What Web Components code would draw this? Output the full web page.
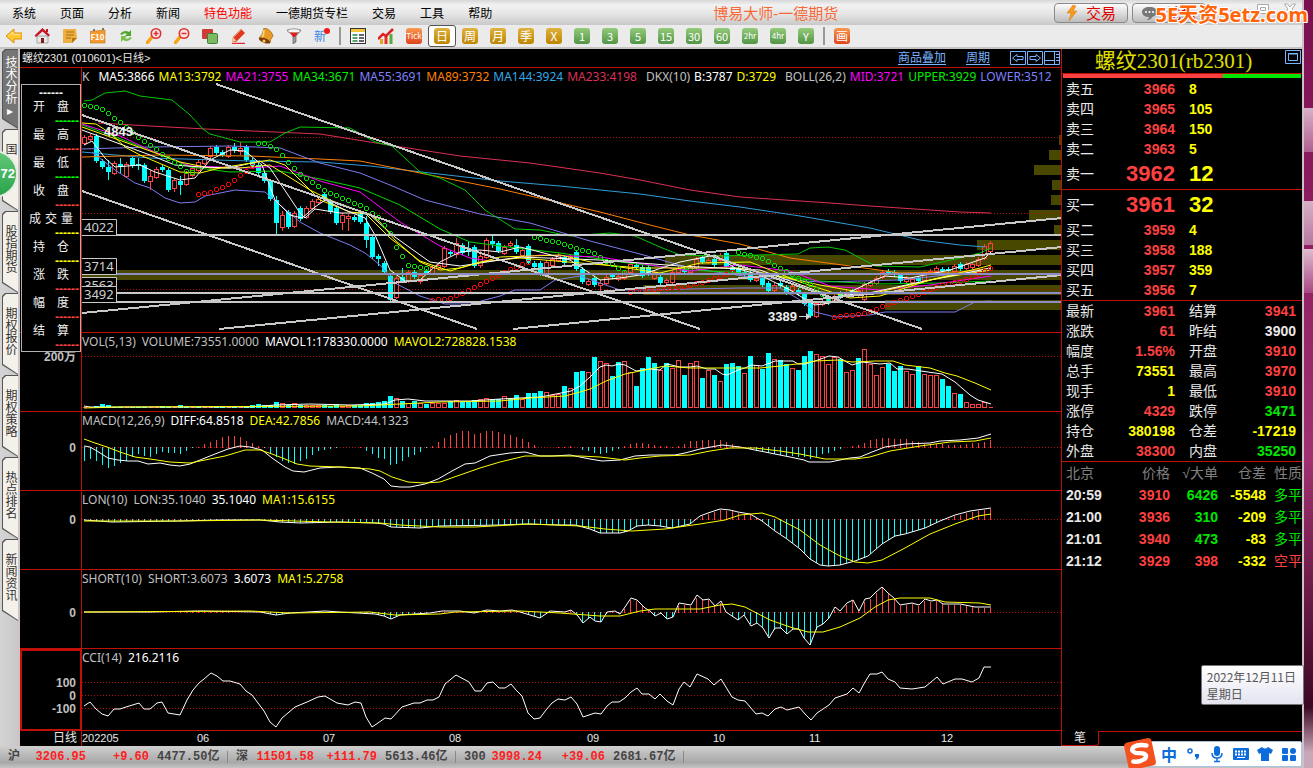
<!DOCTYPE html>
<html lang="zh-CN">
<head>
<meta charset="utf-8">
<title>博易大师-一德期货</title>
<style>
    html, body { margin: 0; height: 100%; }
    body {
        --line: #c01008;
        --up: #ff4040;
        --down: #00e600;
        --mark: #ffff00;
        --ui: "Liberation Sans", "Noto Sans CJK SC", sans-serif;
        --plot: "Noto Sans", "Noto Sans CJK SC", sans-serif;
        font-family: var(--ui);
        font-size: 12px;
        background: #000;
        overflow: hidden;
    }
</style>
</head>
<body>
<trade-app></trade-app>

<script>
const RESET = `
    * { box-sizing: border-box; }
    button { font: inherit; color: inherit; background: none; border: 0; padding: 0; margin: 0; cursor: pointer; }
    svg { display: block; }
`;

/* ---------- menu bar ---------- */
class MenuBar extends HTMLElement {
    constructor() {
        super();
        this.attachShadow({ mode: 'open' });
    }

    connectedCallback() {
        const items = ['系统', '页面', '分析', '新闻', '特色功能', '一德期货专栏', '交易', '工具', '帮助'];
        this.shadowRoot.innerHTML = `
            <style>
                ${RESET}
                :host {
                    display: grid;
                    grid-template-columns: 1fr auto 1fr;
                    align-items: center;
                    height: 25px;
                    position: relative;
                    background: linear-gradient(#d8d8d8, #f2f2f2 20%, #e6e6e6 55%, #c9c9c9);
                    color: #000;
                }
                nav { display: flex; gap: 24px; padding-left: 12px; white-space: nowrap; }
                .hot { color: #f00; }
                h1 { margin: 0; padding-left: 221px; font-size: 15px; font-weight: 400; color: #f76a38; white-space: nowrap; }
                .right { display: flex; justify-content: flex-end; gap: 4px; height: 20px; }
                .deal {
                    width: 74px;
                    border: 1px solid #8a8a8a;
                    border-radius: 4px;
                    background: linear-gradient(#fdfdfd, #d6d6d6 60%, #bcbcbc);
                    color: #e00000;
                    font-size: 15px;
                    display: flex;
                    align-items: center;
                    justify-content: center;
                    gap: 8px;
                }
                .win { display: flex; gap: 2px; width: 92px; justify-content: space-around; align-items: flex-start; padding-left: 14px; }
                .mark {
                    position: absolute;
                    right: 0;
                    top: 2px;
                    margin-right: -6px;
                    z-index: 3;
                    font: bold 20px/25px "Noto Sans", "Noto Sans CJK SC", sans-serif;
                    color: #ff6408;
                    text-shadow: 1px 1px #fff, -1px -1px #fff, 1px -1px #fff, -1px 1px #fff;
                    white-space: nowrap;
                }
            </style>
            <nav>${items.map(t => `<button${t === '特色功能' ? ' class="hot"' : ''}>${t}</button>`).join('')}</nav>
            <h1>博易大师-一德期货</h1>
            <div class="right">
                <button class="deal">
                    <svg width="12" height="16" viewBox="0 0 12 16"><path d="M7 0 1 8h4L3 16l8-10H7l3-5z" fill="#f79a1c" stroke="#d87a10" stroke-width=".5"/></svg>交易
                </button>
                <button class="deal">
                    <svg width="17" height="14" viewBox="0 0 17 14"><path d="M8.500 1C4 1 1 3 1 6s3 5 7 5c0 1-1 2-2 3 3 0 5-2 5-3 3-1 5-2 5-5s-3-5-7.500-5z" fill="#777"/><circle cx="5" cy="6" r="1" fill="#fff"/><circle cx="8.500" cy="6" r="1" fill="#fff"/><circle cx="12" cy="6" r="1" fill="#fff"/></svg>论坛
                </button>
                <div class="win">
                    <button aria-label="最小化"><svg width="14" height="12"><rect x="1.500" y="7.500" width="10" height="3" fill="#fff" stroke="#aaa"/></svg></button>
                    <button aria-label="最大化"><svg width="14" height="12"><path d="M1.500 1.500h11v9h-11zM4.500 4.500h5v3h-5z" fill="#fff" stroke="#aaa"/></svg></button>
                    <button aria-label="关闭"><svg width="14" height="12"><path d="M1.500 1h3L7 4l2.500-3h3L9 6l3.500 5h-3L7 8l-2.500 3h-3L5 6z" fill="#fff" stroke="#aaa"/></svg></button>
                </div>
            </div>
            <span class="mark">5E天资5etz.com</span>
        `;
    }
}

/* ---------- tool bar ---------- */
const ICONS = {
    '后退': '<path d="M0 8 8 1v4h8v6H8v4z" fill="#ffc62e" stroke="#d8920c"/><path d="M2.500 8l4.500-4v2.500h7" fill="none" stroke="#ffe89a"/>',
    '首页': '<path d="M3 8h11v7H3z" fill="#e8e8e8" stroke="#777" stroke-width=".6"/><path d="M8.500 0 16 7l-1.500 1.500L8.500 3.500 2 9 .5 7.500z" fill="#c41826"/><path d="M12 1h2v3h-2z" fill="#c41826"/><path d="M7 10h3v5H7z" fill="#7a2020"/>',
    '便笺': '<path d="M1 1.500Q1 1 2 1h12l1 9-5 5H1z" fill="#eeb040"/><path d="M4 4h8M4 7h8M4 10h5" stroke="#a86c10"/><path d="M15 10l-5 5v-5z" fill="#b87812"/>',
    'F10': '<path d="M0 3.500 15 2v13H0z" fill="#f39a30" stroke="#c07010" stroke-width=".6"/><path d="M3 1h2v2H3zM12 0h2v2h-2z" fill="#777"/><text x="7.500" y="12" font-size="8" font-weight="bold" text-anchor="middle" fill="#fff">F10</text>',
    '刷新': '<path d="M2 6q4-5 9-2l2-2v6H7l2-2Q6 4 4 7z" fill="#4fa62c"/><path d="M14 10q-4 5-9 2l-2 2V8h6l-2 2q3 2 5-1z" fill="#78c24c"/>',
    '放大': '<path d="M6 9 1 15" stroke="#f6a614" stroke-width="3.500" stroke-linecap="round"/><circle cx="10" cy="5.500" r="4.700" fill="#ffe4e4" stroke="#e03030" stroke-width="1.600"/><path d="M7.500 5.500h5M10 3v5" stroke="#e03030" stroke-width="1.500"/>',
    '缩小': '<path d="M6 9 1 15" stroke="#f6a614" stroke-width="3.500" stroke-linecap="round"/><circle cx="10" cy="5.500" r="4.700" fill="#ffe4e4" stroke="#e03030" stroke-width="1.600"/><path d="M7.500 5.500h5" stroke="#e03030" stroke-width="1.500"/>',
    '叠加': '<rect x="0" y="1" width="11" height="10" rx="1" fill="#d23a34"/><rect x="5.500" y="5.500" width="10" height="10" rx="1" fill="#7cba62" stroke="#3c8038"/>',
    '画线': '<path d="M2 14l1-5 8-8 4 4-9 9z" fill="#e0381c"/><path d="M4 9l8-8" stroke="#f48a6c"/><path d="M2 14l1-5 3.500 4z" fill="#f3d19a"/><path d="M2 15.500h13" stroke="#e03030" stroke-width="1.500"/>',
    '预警': '<path d="M6 0q-1 7-5 10l11 5q0-4 3-7Q13 1 6 0z" fill="#e89a24" stroke="#a05c10" stroke-width=".7"/><path d="M6 2q0 5-2 8" stroke="#ffd878" stroke-width="1.500" fill="none"/><ellipse cx="6.500" cy="12.500" rx="6" ry="2.300" transform="rotate(22 6.500 12.500)" fill="#7b3d0d"/><circle cx="6" cy="13" r="1.500" fill="#ffcf4d"/>',
    '筛选': '<path d="M1 2h14l-5 6v6l-3 2V8z" fill="#999" stroke="#666" stroke-width=".7"/><ellipse cx="8" cy="3" rx="6.500" ry="2.200" fill="#f4f4f4" stroke="#777" stroke-width=".7"/><path d="M4 4.500h8L9 9H7z" fill="#e02020"/>',
    '新': '<text x="6" y="13" font-size="12" text-anchor="middle" fill="#3c86e0">新</text><circle cx="13" cy="3" r="3" fill="#f01818"/>',
    '报价': '<rect x=".5" y=".5" width="15" height="15" fill="#fff" stroke="#333"/><path d="M1 2.500h14" stroke="#f2c53c" stroke-width="3"/><path d="M2.500 7h5M2.500 10h5M2.500 13h5" stroke="#1c8a3c" stroke-width="1.500"/><path d="M9 7h5M9 10h5M9 13h5" stroke="#334" stroke-width="1.500"/>',
    '走势': '<path d="M2 11h3v5H2z" fill="#f0a020"/><path d="M6.500 8h3v8h-3z" fill="#e03020"/><path d="M11.500 6h3v10h-3z" fill="#5aa83c"/><path d="M0 11l5-5 3 2 7-7" fill="none" stroke="#e02020" stroke-width="2.500"/>'
};

class ToolBar extends HTMLElement {
    constructor() {
        super();
        this.attachShadow({ mode: 'open' });
    }

    connectedCallback() {
        const icon = name => `<button class="tool" aria-label="${name}"><svg width="16" height="16" viewBox="0 0 16 16">${ICONS[name]}</svg></button>`;
        const key = (t, kind) => `<button class="tool${t === '日' ? ' on' : ''}"><span class="${kind}${t.length > 2 ? ' tight' : ''}">${t}</span></button>`;
        const names = Object.keys(ICONS);
        this.shadowRoot.innerHTML = `
            <style>
                ${RESET}
                :host {
                    display: flex;
                    align-items: center;
                    height: 24px;
                    background: #ebebeb;
                    border-bottom: 2px solid #c8c4c4;
                    font-family: "Noto Sans CJK SC", sans-serif;
                }
                .tool { width: 28px; height: 22px; flex: none; display: flex; align-items: center; justify-content: center; }
                .on { background: #fff; border: 1px solid #555; border-radius: 3px; }
                i { width: 2px; height: 18px; margin: 0 3px; background: #999; }
                span {
                    width: 16px;
                    height: 16px;
                    border-radius: 3px;
                    color: #fff;
                    font-size: 12px;
                    line-height: 16px;
                    text-align: center;
                    overflow: hidden;
                    white-space: nowrap;
                }
                .gold { background: linear-gradient(#dfb340, #bd8500); }
                .leaf { background: linear-gradient(#95cb7a, #529545); font-size: 11px; }
                .fire { background: linear-gradient(#f79a50, #e0441c); }
                .tight { font-size: 8px; }
            </style>
            ${names.slice(0, 12).map(icon).join('')}<i></i>
            ${names.slice(12).map(icon).join('')}${key('Tick', 'fire')}
            ${['日', '周', '月', '季', 'X'].map(t => key(t, 'gold')).join('')}
            ${['1', '3', '5', '15', '30', '60', '2hr', '4hr', 'Y'].map(t => key(t, 'leaf')).join('')}
            <i></i>${key('画', 'fire')}
        `;
    }
}

/* ---------- vertical page tabs ---------- */
class SideTabs extends HTMLElement {
    constructor() {
        super();
        this.attachShadow({ mode: 'open' });
    }

    connectedCallback() {
        const tabs = ['国', '股指期货', '期权报价', '期权策略', '热点排名', '新闻资讯'];
        this.shadowRoot.innerHTML = `
            <style>
                ${RESET}
                :host {
                    display: flex;
                    flex-direction: column;
                    position: relative;
                    width: 20px;
                    padding-left: 2px;
                    background: linear-gradient(90deg, #d4d4d4, #cacaca 16px, #cdc4c6 18px);
                }
                button {
                    width: 16px;
                    height: 82px;
                    padding-top: 14px;
                    display: flex;
                    position: relative;
                    isolation: isolate;
                    color: #333;
                    background: #555;
                    writing-mode: vertical-rl;
                    align-items: center;
                    line-height: 16px;
                    clip-path: polygon(0 3px, 3px 0, 100% 0, 100% 100%, 0 calc(100% - 10px));
                }
                button::before {
                    content: "";
                    position: absolute;
                    z-index: -1;
                    inset: 1px 0 1px 1px;
                    background: #f3f1ea;
                    clip-path: polygon(0 3px, 3px 0, 100% 0, 100% 100%, 0 calc(100% - 10px));
                }
                .on { height: 80px; padding-top: 7px; color: #fff; }
                .on::before { background: #757575; }
                .badge {
                    position: absolute;
                    left: -30px;
                    top: 101px;
                    width: 48px;
                    height: 48px;
                    border: 2px solid #e4ece4;
                    border-radius: 50%;
                    background: linear-gradient(#62c878, #28a24a);
                    color: #fff;
                    font: bold 13px/44px var(--ui);
                    text-align: right;
                    padding-right: 1px;
                }
            </style>
            <button class="on">技术分析▸</button>
            ${tabs.map(t => `<button>${t}</button>`).join('')}
            <div class="badge">72</div>
        `;
    }
}

/* ---------- chart data, page pixels ---------- */
const STEP = 6;
const FIRST_X = 84;
const COUNT = 152;

const CANDLES = `r137/143 r136/139 c136/161 c161/167 c167/172/160/180 r163/173 c164/167/158/173 r164/176 c158/166 c164/166/158/170
c165/181 r176/181/170/190 r169/177 c167/170 c170/190 r180/188/178/192 c181/185/176/195 r173/184 r168/175 r162/170
r159/163 r148/156 c147/153 c152/155 r147/156 c147/150/143/153 r148/151/142/155 c147/160 c160/166 c165/173
c173/181 c181/199 c200/223/196/234 r215/227/211/231 c212/227 r213/226 c208/219 r208/217 r201/208 r199/202
c194/199 c201/212 c208/223 r215/222/213/230 r216/218/214/231 c217/220 c214/222 c223/240/216/248 c237/257 c256/259/254/266
c263/272 c276/300 r278/297 c277/281/268/283 r272/281 c272/277 r275/281/273/284 c271/273 r267/273 r265/268
r248/266 c252/254 r243/254/238/258 c245/253 c250/252/242/256 c247/266 r256/265/251/268 r240/257 c241/244/236/248 c243/251
r247/253 r243/245 c245/252/239/254 r250/255 c246/263 c263/267 c263/274 r262/273 r259/265 r255/260
c257/263 r256/258 c252/269 c269/282 r281/284 c278/285 r283/285/280/292 r277/283 c275/277 r276/279
r273/278 r264/272 c265/267 c267/276 c267/274 r272/278 c277/283 r280/282 r272/282 r268/272
c269/272 r267/272 r259/267 c257/262 r260/262 c259/265 r255/260 c253/267 c267/270 c268/273
c272/275 c273/280 r278/280 c278/285 c283/291 r285/290 c283/286 c287/293 r286/290 c290/294
c294/304 c302/316 r303/316 r301/304 c298/303 r296/301 c293/297 r292/296 c291/295 r290/295
r284/299 r282/285 r278/283 r272/277 c271/273 c272/275 c275/281 r278/281 r279/282 c278/281
r273/280 r271/273 r268/271 c269/271 c269/271 r266/271 c264/269 r264/268 r264/267 r259/265
r246/258 r243/251`.split(/\s+/);

const VOLUME = `r1 r1 c2 c4 c3 c1 c1 r1 c1 c1 c1 r1 r1 c2 c1 r1 c3 c1 r1 c1 r1 r1 c1 c1 r1 c1 r1 c2 c3 c4 c3 c3 c6 r5 c3 r5 c3 r3 r3 r3 c3 c2 c4 r2 r3 c3 c3 c5 c5 c6
c7 c12 r10 c7 r5 c7 r5 c4 r5 r5 r5 c7 r8 c6 c7 c8 r9 r10 c9 c9 r12 c9 c13 r9 c15 c15 c17 r16 r13 r14 c22 r20 c36 c37 r36 c51 r47 r45 c32 c46
r47 r36 c22 c40 c51 c45 r38 c45 r40 r48 c33 r45 r47 c30 r38 c33 r27 c44 c45 c42 r35 c52 r43 c39 c55 r49 c48 c44 r40 c38 c52 c57 r54 r52 r44 r51 c49 r36 r38 c50
r59 r44 r33 r41 c44 c37 c42 r37 r34 c42 r34 r33 r33 c29 c22 r15 c14 r6 r4 r4 r6 r1`.split(/\s+/);

const LINES = {
    ma233: '98,123 150,126 206,129 320,134 395,146 460,156 530,163 600,173 640,180 690,190 740,197 830,203 870,206 960,212 991,213',
    ma144: '82,152 150,158 250,161 320,162 370,166 430,173 500,181 560,186 640,194 690,201 740,207 800,216 870,228 920,240 960,245 985,247',
    ma89: '82,157 160,155 250,156 320,159 360,161 430,175 500,189 600,212 650,225 690,235 740,244 790,258 850,266 900,273 960,272 991,268',
    ma55: '82,149 150,147 230,146 280,148 320,163 360,173 390,185 425,200 480,214 530,223 590,241 640,254 690,268 750,277 820,282 900,280 991,270',
    ma34: '82,125 110,135 150,150 190,167 230,172 280,171 320,179 360,188 400,205 440,229 470,242 500,246 560,253 620,262 690,270 760,274 820,281 880,284 940,283 991,281',
    ma21: '82,124 120,136 150,150 190,166 250,168 280,166 320,181 360,192 400,222 440,246 470,258 490,261 540,255 600,257 650,265 690,271 740,265 790,271 830,286 880,290 930,285 991,276',
    ma13: '82,123 96,124 110,133 125,147 140,155 180,172 200,173 220,168 270,160 285,165 300,180 320,200 350,212 370,214 380,222 395,240 420,262 440,270 460,268 500,257 560,255 600,264 660,273 700,263 750,262 800,282 850,298 880,296 930,280 980,268 991,265',
    ma5: '84,145 92,141 105,158 115,167 140,165 155,172 180,180 195,178 210,160 230,150 245,151 262,165 275,200 290,215 302,218 315,207 325,200 345,210 365,218 375,235 390,270 405,281 420,280 440,262 460,252 480,250 500,252 520,247 540,252 570,260 588,272 600,280 620,278 640,275 680,262 715,255 735,268 760,275 790,290 815,305 830,303 850,292 875,280 885,276 910,278 950,270 985,258 991,252',
    dkxB: '82,130 150,155 175,165 200,167 230,168 260,161 270,168 300,213 305,218 315,209 340,213 360,213 370,215 395,237 430,262 460,266 520,257 600,260 680,266 760,270 820,292 860,295 920,282 991,268',
    dkxD: '82,127 150,151 180,162 210,168 240,168 270,165 310,190 330,200 365,213 390,238 420,261 450,271 480,262 520,258 640,268 740,268 820,285 870,294 940,278 991,270',
    upper: '84,101 92,100 105,93 125,91 140,96 172,100 190,115 203,129 210,134 240,142 270,142 285,133 300,127 350,128 375,142 392,146 420,172 440,178 465,190 485,210 515,229 540,230 570,236 610,233 635,236 660,247 680,255 720,256 798,254 810,248 828,247 845,250 875,266 920,267 960,258 980,253 991,248',
    lower: '92,152 115,170 135,183 150,188 165,198 180,203 195,202 205,196 235,190 265,192 280,205 300,222 320,233 350,245 365,253 380,265 395,283 420,296 445,304 470,304 500,296 515,290 540,290 555,280 580,276 620,290 650,290 690,289 740,288 780,288 800,300 815,312 835,317 870,315 885,312 955,312 975,302 991,301',
    vol1: '84,406 90,407 250,407 275,405 310,404 350,405 385,404 395,400 408,399 425,401 470,401 500,399 520,398 540,397 556,394 571,391 580,386 590,377 600,367 606,365 612,366 619,364 625,365 636,371 650,369 660,370 667,364 680,367 690,367 697,366 707,369 715,369 722,374 727,375 738,370 745,368 751,365 762,366 775,361 793,361 798,364 805,364 815,361 829,356 838,357 852,365 862,362 880,364 890,363 897,369 908,369 921,371 942,374 955,382 970,395 978,400 991,404',
    vol2: '84,408 120,407 360,406 400,404 440,402 500,401 530,398 565,396 580,392 590,389 606,381 625,374 645,370 665,366 690,368 722,368 760,368 780,366 805,363 815,361 838,360 852,362 875,361 893,361 905,365 930,368 945,373 957,376 975,383 991,390',
    diff: '84,446 90,447 97,451 108,458 118,460 128,461 138,461 148,464 160,463 170,465 180,466 190,464 200,460 215,454 228,449 240,446 250,447 262,450 272,458 285,467 293,471 304,472 312,470 320,468 340,467 360,468 372,473 384,479 391,486 400,487 410,487 425,484 438,479 452,471 465,464 475,463 490,456 510,453 525,452 540,456 552,456 570,455 580,457 590,459 602,461 620,460 635,456 650,455 675,455 685,453 700,449 722,445 740,447 755,450 775,454 790,457 804,460 809,462 830,462 850,458 860,457 872,452 885,447 905,444 930,443 940,441 960,440 978,438 991,434',
    dea: '84,439 95,443 107,447 120,452 135,457 150,459 170,462 190,463 205,460 225,456 245,450 260,450 272,454 285,459 297,464 310,466 340,467 370,469 380,471 392,477 408,482 425,483 440,482 460,475 480,468 500,462 525,456 540,456 580,456 600,457 625,460 640,458 660,456 690,455 710,451 730,448 755,448 780,451 800,454 825,459 855,459 870,457 890,451 920,446 950,442 975,441 991,438',
    lon: '84,520 112,522 180,521 220,520 260,520 280,522 300,523 340,522 375,523 384,524 391,527 420,528 440,526 500,525 525,524 560,525 575,525 590,529 600,533 620,533 628,531 637,526 648,525 660,526 672,528 690,524 700,516 708,513 720,509 730,510 738,512 750,514 762,521 775,531 787,539 800,549 810,559 820,565 828,566 840,565 855,561 868,556 882,544 895,536 905,534 925,528 940,521 955,515 970,511 991,508',
    lonMa: '84,521 180,521 260,520 330,522 380,523 400,525 440,527 475,527 530,524 580,526 605,529 632,531 665,529 700,524 725,520 740,515 762,513 775,517 800,530 820,545 840,556 855,562 868,563 882,560 905,548 930,534 955,524 978,516 991,514',
    short: '84,612 150,612 200,611 260,612 276,615 290,613 325,611 340,612 375,614 384,616 391,619 400,615 430,613 442,611 460,611 474,613 487,610 500,611 512,610 520,612 530,615 540,618 550,611 565,612 571,610 578,616 583,623 590,617 595,621 601,622 607,612 615,611 620,614 625,607 631,598 637,600 645,608 650,611 655,616 661,613 667,619 673,617 679,603 685,604 691,605 697,595 703,600 709,599 715,606 721,601 726,612 732,616 738,620 744,615 751,626 757,623 763,628 769,638 775,628 781,628 787,634 793,629 799,629 804,638 810,645 817,627 823,624 829,618 835,607 840,611 847,603 853,600 859,611 865,599 870,598 876,592 882,587 888,593 894,598 900,605 912,603 919,605 925,599 931,601 937,600 943,604 960,604 975,607 991,607',
    shortMa: '84,612 250,611 290,613 370,612 395,615 440,614 455,612 520,611 560,613 600,616 620,616 640,611 655,609 700,609 720,605 732,604 745,607 770,620 790,627 808,632 823,632 840,627 860,618 875,607 888,600 900,598 930,598 945,602 980,603 991,605',
    cci: '84,706 90,702 96,709 102,714 108,716 114,709 120,709 126,707 139,703 144,709 150,709 157,703 162,702 168,713 180,715 187,700 193,690 199,683 204,679 211,673 217,676 223,681 230,681 240,684 246,691 252,695 258,703 264,711 270,722 276,727 282,718 295,707 307,702 318,697 325,696 337,703 348,705 355,702 361,703 366,717 372,727 378,723 385,718 391,719 402,707 414,703 420,703 427,700 433,700 439,697 445,684 456,675 469,682 475,691 481,691 487,683 493,682 499,688 505,688 511,684 516,690 522,696 528,713 534,719 540,718 546,710 552,703 558,699 565,700 571,697 577,704 583,717 595,713 601,714 607,706 612,702 619,702 625,698 631,692 637,688 642,694 649,694 655,699 660,694 667,701 673,705 679,689 684,682 690,687 697,674 708,679 714,685 721,679 732,697 738,700 745,701 756,714 762,713 768,716 775,709 781,707 787,710 799,707 805,714 811,720 817,713 829,705 835,698 847,694 853,688 859,693 865,682 870,674 877,674 882,672 888,679 895,682 900,688 912,689 925,687 937,677 943,684 955,679 962,679 972,682 979,678 984,667 991,667'
};

// stop-and-reverse dots: one run per side
const SAR = [
    ['#00e600', '84,105 90,106 96,107 102,109 108,113 120,122 132,132 144,141 156,149 168,158 180,166 186,171 192,172'],
    ['#ff0000', '198,194 210,192 228,184 252,166'],
    ['#00e600', '258,143 264,143 276,149 300,174 324,190 348,200 366,208 378,217 390,233 396,247 408,265 426,268'],
    ['#ff0000', '432,300 450,298 470,289 494,277 512,268 528,262'],
    ['#00e600', '534,237 558,242 576,248 594,253 624,272'],
    ['#ff0000', '630,292 660,288 684,286 702,282 720,276 732,272'],
    ['#00e600', '738,252 762,258 780,268 810,284 828,299'],
    ['#ff0000', '834,317 864,313 888,304 912,296 936,287 966,279 990,268']
];

const PROFILE = [[135, 2], [150, 12], [165, 27], [180, 9], [195, 10], [210, 32], [225, 7], [240, 84], [255, 396], [270, 4000], [285, 418], [300, 176]];
const TRENDS = [[216, 84, 922, 329], [82, 115, 700, 329], [82, 191, 477, 329], [82, 313, 1062, 218], [219, 329, 1062, 247], [513, 329, 1062, 275]];

const knots = str => str.split(' ').map(p => p.split(',').map(Number));

function valueAt(points, x) {
    for (let i = 1; i < points.length; i++) {
        const [x0, y0] = points[i - 1];
        const [x1, y1] = points[i];
        if (x <= x1) return y0 + (y1 - y0) * (Math.max(x, x0) - x0) / (x1 - x0);
    }
    return points[points.length - 1][1];
}

const curve = (name, color) => `<polyline points="${LINES[name]}" fill="none" stroke="${color}"/>`;
const dotted = ys => ys.map(y => `<path d="M82 ${y}.5H4000" stroke="#b01010" stroke-dasharray="1 2"/>`).join('');

function bars(zero, heightAt) {
    let out = '';
    for (let i = 0; i < COUNT; i++) {
        const x = FIRST_X + i * STEP;
        const h = Math.round(heightAt(x));
        if (h) out += `<path d="M${x}.5 ${zero + (h < 0 ? 0 : 1)}v${-h}" stroke="${h > 0 ? '#ff4040' : '#00ffff'}"/>`;
    }
    return `<g shape-rendering="crispEdges">${out}</g>`;
}

function drawCandles() {
    return CANDLES.map((c, i) => {
        const [top, bottom, high, low] = c.slice(1).split('/').map(Number);
        const x = FIRST_X + i * STEP;
        const hi = high || top - 2;
        const lo = low || bottom + 2;
        return c[0] === 'c'
            ? `<path d="M${x}.5 ${hi}V${lo}" stroke="#00ffff"/><rect x="${x - 2}" y="${top}" width="5" height="${bottom - top}" fill="#00ffff"/>`
            : `<path d="M${x}.5 ${hi}V${top}M${x}.5 ${bottom}V${lo}M${x - 1.5} ${top}.5h4V${bottom}.5h-4z" fill="none" stroke="#ff4040"/>`;
    }).join('');
}

function drawVolume() {
    return VOLUME.map((v, i) => {
        const h = Number(v.slice(1));
        const x = FIRST_X + i * STEP;
        return v[0] === 'c'
            ? `<rect x="${x - 2}" y="${408 - h}" width="5" height="${h}" fill="#00ffff"/>`
            : `<path d="M${x - 1.5} ${408 - h}.5h4v${h - 1}h-4z" fill="none" stroke="#ff4040"/>`;
    }).join('');
}

function drawSar() {
    return SAR.map(([color, run]) => {
        const points = knots(run);
        let out = '';
        for (let x = points[0][0]; x <= points[points.length - 1][0]; x += STEP) {
            out += `<circle cx="${x}.5" cy="${Math.round(valueAt(points, x))}.5" r="2"/>`;
        }
        return `<g fill="none" stroke="${color}" shape-rendering="crispEdges">${out}</g>`;
    }).join('');
}

const priceTag = (y, text) => `<path d="M82 ${y}.5h34.500v16H82" fill="#000" stroke="#c8c8c8"/><text x="84" y="${y + 13}" font-size="13" fill="#d0d0d0">${text}</text>`;

function drawMain() {
    const ma = [['ma233', '#dc3052'], ['ma144', '#309cd8'], ['ma89', '#ff8000'], ['ma55', '#7c7cf0'], ['upper', '#00c800'], ['lower', '#7c7cf0'],
        ['ma34', '#00d800'], ['ma21', '#ff00ff'], ['dkxD', '#ffff00'], ['dkxB', '#ffffff'], ['ma13', '#ffff00']];
    return `
        ${dotted([137, 213, 289])}
        <g shape-rendering="crispEdges">${drawCandles()}</g>
        ${ma.map(([n, c]) => curve(n, c)).join('')}${curve('ma5', '#ffffff')}
        ${drawSar()}
        <g stroke="#c8c8c8" stroke-width="2" shape-rendering="crispEdges">
            ${TRENDS.map(t => `<path d="M${t[0]} ${t[1]}L${t[2]} ${t[3]}"/>`).join('')}
            <path d="M82 235H4000M82 293H4000M82 302H4000"/>
            <path d="M82 274H4000M660 293H4000M885 302H4000" stroke="#8c8cc8"/>
        </g>
        ${priceTag(219, '4022')}${priceTag(258, '3714')}${priceTag(277, '3563')}${priceTag(286, '3492')}
        <g font-family="Liberation Sans" font-weight="bold" font-size="13" fill="#f0f0f0">
            <text x="104" y="136">4843</text>
            <text x="768" y="321">3389</text>
        </g>
        <path d="M799 316.500h7" stroke="#d0d0d0"/><path d="M806 313l5 3.500-5 3.500z" fill="#d0d0d0"/>
    `;
}

const PANELS = [
    {
        top: 68,
        dense: true,
        legend: [['K', '#c0c0c0'], ['MA5:3866', '#fff', 1], ['MA13:3792', '#ff0'], ['MA21:3755', '#f0f'], ['MA34:3671', '#00f000'], ['MA55:3691', '#8080ff'],
            ['MA89:3732', '#ff8000'], ['MA144:3924', '#30a8e8'], ['MA233:4198', '#dc3058'], ['DKX(10)', '#c0c0c0', 1], ['B:3787', '#fff'], ['D:3729', '#ff0'],
            ['BOLL(26,2)', '#c0c0c0', 1], ['MID:3721', '#f0f'], ['UPPER:3929', '#00f000'], ['LOWER:3512', '#8080ff']],
        profile: PROFILE,
        draw: drawMain
    },
    {
        top: 333,
        legend: [['VOL(5,13)', '#c0c0c0'], ['VOLUME:73551.0000', '#c0c0c0'], ['MAVOL1:178330.0000', '#fff'], ['MAVOL2:728828.1538', '#ff0']],
        scale: [[361, '200万']],
        draw: () => `${dotted([356])}<g shape-rendering="crispEdges">${drawVolume()}</g>${curve('vol1', '#fff')}${curve('vol2', '#ff0')}`
    },
    {
        top: 412,
        legend: [['MACD(12,26,9)', '#c0c0c0'], ['DIFF:64.8518', '#fff'], ['DEA:42.7856', '#ff0'], ['MACD:44.1323', '#c0c0c0']],
        scale: [[452, '0']],
        draw() {
            const diff = knots(LINES.diff);
            const dea = knots(LINES.dea);
            return dotted([447]) + bars(447, x => 2 * (valueAt(dea, x) - valueAt(diff, x))) + curve('diff', '#fff') + curve('dea', '#ff0');
        }
    },
    {
        top: 491,
        legend: [['LON(10)', '#c0c0c0'], ['LON:35.1040', '#c0c0c0'], ['35.1040', '#fff'], ['MA1:15.6155', '#ff0']],
        scale: [[524, '0']],
        draw() {
            const lon = knots(LINES.lon);
            return dotted([519]) + bars(519, x => 519 - valueAt(lon, x)) + curve('lon', '#fff') + curve('lonMa', '#ff0');
        }
    },
    {
        top: 570,
        legend: [['SHORT(10)', '#c0c0c0'], ['SHORT:3.6073', '#c0c0c0'], ['3.6073', '#fff'], ['MA1:5.2758', '#ff0']],
        scale: [[617, '0']],
        draw() {
            const short = knots(LINES.short);
            return dotted([612]) + bars(612, x => 612 - valueAt(short, x)) + curve('short', '#fff') + curve('shortMa', '#ff0');
        }
    },
    {
        top: 649,
        active: true,
        legend: [['CCI(14)', '#c0c0c0'], ['216.2116', '#fff']],
        scale: [[687, '100'], [700, '0'], [713, '-100']],
        draw: () => dotted([682, 695, 708]) + curve('cci', '#fff')
    }
];

/* one indicator pane: value scale on the left, plot on the right */
class ChartPanel extends HTMLElement {
    constructor() {
        super();
        this.attachShadow({ mode: 'open' });
    }

    set config(value) {
        this._config = value;
        this.render();
    }

    render() {
        const { top, legend, scale = [], profile = [], active, dense, draw } = this._config;
        this.shadowRoot.innerHTML = `
            <style>
                ${RESET}
                :host {
                    display: grid;
                    grid-template-columns: 61px 1fr;
                    min-height: 0;
                    border-bottom: 1px solid var(--line);
                    font-family: var(--plot);
                }
                .scale { font: bold 12px var(--ui); min-height: 0; }
                .scale.active { border: 2px solid var(--line); margin: 0 -1px -1px 0; }
                .scale.active svg { margin: -2px; }
                .plot { display: grid; min-height: 0; min-width: 0; border-left: 1px solid var(--line); overflow: hidden; }
                .plot > * { grid-area: 1 / 1; min-height: 0; min-width: 0; }
                .plot > svg { width: 100%; height: 100%; overflow: hidden; }
                .plot > svg > svg { overflow: visible; }
                .legend { display: flex; gap: 6px; line-height: 18px; height: 18px; white-space: nowrap; z-index: 1; }
                .legend.dense { gap: 4px; }
                .legend .far { margin-left: 5px; }
            </style>
            <div class="scale${active ? ' active' : ''}">
                <svg width="61" height="78">${scale.map(([y, t]) => `<text x="56" y="${y - top}" text-anchor="end" fill="#c0c0c0">${t}</text>`).join('')}</svg>
            </div>
            <div class="plot">
                <svg>
                    <svg x="100%">${profile.map(([y, w]) => `<rect x="${-w}" y="${y - top}" width="${w}" height="10" fill="#484800"/>`).join('')}</svg>
                    <g transform="translate(-82 ${-top})">${draw()}</g>
                </svg>
                <div class="legend${dense ? ' dense' : ''}">${legend.map(([t, c, far]) => `<span${far ? ' class="far"' : ''} style="color:${c}">${t}</span>`).join('')}</div>
            </div>
        `;
    }
}

/* floating read-out of the bar under the cursor */
class ValueBox extends HTMLElement {
    constructor() {
        super();
        this.attachShadow({ mode: 'open' });
    }

    connectedCallback() {
        const rows = [['开 盘', '#0f0'], ['最 高', '#ff4040'], ['最 低', '#0f0'], ['收 盘', '#ff4040'], ['成 交 量', '#ff0'],
            ['持 仓', '#ff0'], ['涨 跌', '#ff4040'], ['幅 度', '#ff4040'], ['结 算', '#ff4040']];
        this.shadowRoot.innerHTML = `
            <style>
                ${RESET}
                :host {
                    display: block;
                    width: 60px;
                    padding: 2px 1px 0;
                    border: 1px solid #b0b0b0;
                    background: #000;
                    color: #f0f0f0;
                    font-weight: bold;
                }
                p, dl, dt, dd { margin: 0; }
                p { text-align: center; line-height: 12px; }
                dt { width: 36px; margin: 0 auto 0 10px; text-align-last: justify; line-height: 16px; font-weight: 400; }
                dt.wide { width: 44px; margin-left: 6px; }
                dd { text-align: right; line-height: 12px; }
            </style>
            <p>------</p>
            <dl>${rows.map(([t, c]) => `<dt${t.length > 3 ? ' class="wide"' : ''}>${t}</dt><dd style="color:${c}">------</dd>`).join('')}</dl>
        `;
    }
}

class ChartView extends HTMLElement {
    constructor() {
        super();
        this.attachShadow({ mode: 'open' });
    }

    connectedCallback() {
        const months = [[82, '202205'], [197, '06'], [323, '07'], [449, '08'], [587, '09'], [713, '10'], [809, '11'], [941, '12']];
        this.shadowRoot.innerHTML = `
            <style>
                ${RESET}
                :host {
                    display: grid;
                    grid-template-rows: 19px minmax(0, 1fr) repeat(4, 79px) 82px 15px;
                    position: relative;
                    min-width: 0;
                    background: #000;
                    color: #e8e8e8;
                }
                header {
                    display: flex;
                    align-items: center;
                    padding-left: 2px;
                    border-bottom: 1px solid var(--line);
                    line-height: 18px;
                }
                h2 { flex: 1; margin: 0; font-size: 11px; font-weight: 400; }
                a { color: #78b4ff; text-underline-offset: 2px; margin-right: 20px; }
                header svg { margin-right: 1px; }
                header button { flex: none; }
                .months { display: grid; grid-template-columns: 61px 1fr; font-size: 11px; line-height: 15px; }
                .months span { text-align: right; padding-right: 4px; font-size: 12px; }
                .months svg { width: 100%; height: 15px; border-left: 1px solid var(--line); }
                value-box { position: absolute; left: 1px; top: 35px; z-index: 2; }
            </style>
            <header>
                <h2>螺纹2301 (010601)&lt;日线&gt;</h2>
                <a href="#">商品叠加</a><a href="#">周期</a>
                <button aria-label="向左"><svg width="16" height="14" fill="none" stroke="#78b4ff"><path d="M.5.5h15v13H.5zM2.500 7 7 3.500v2h6v3H7v2z"/></svg></button>
                <button aria-label="向右"><svg width="16" height="14" fill="none" stroke="#78b4ff"><path d="M.5.5h15v13H.5zM13.500 7 9 3.500v2H3v3h6v2z"/></svg></button>
                <button aria-label="布局"><svg width="16" height="14" fill="none" stroke="#78b4ff"><path d="M.5.5h15v13H.5zM.5 9.500h10M10.500 1v13M12 3.500h3M12 6.500h3M12 9.500h3"/></svg></button>
            </header>
            ${PANELS.map(() => '<chart-panel></chart-panel>').join('')}
            <div class="months">
                <span>日线</span>
                <svg>${months.map(([x, t]) => `<text x="${x - 82}" y="11" fill="#e8e8e8">${t}</text>`).join('')}</svg>
            </div>
            <value-box></value-box>
        `;
        this.shadowRoot.querySelectorAll('chart-panel').forEach((el, i) => {
            el.config = PANELS[i];
        });
    }
}

/* ---------- order book and ticks ---------- */
class QuoteBoard extends HTMLElement {
    constructor() {
        super();
        this.attachShadow({ mode: 'open' });
    }

    connectedCallback() {
        const asks = [['卖五', 3966, 8], ['卖四', 3965, 105], ['卖三', 3964, 150], ['卖二', 3963, 5], ['卖一', 3962, 12]];
        const bids = [['买一', 3961, 32], ['买二', 3959, 4], ['买三', 3958, 188], ['买四', 3957, 359], ['买五', 3956, 7]];
        const stats = [
            ['最新', '3961', 'up', '结算', '3941', 'up'], ['涨跌', '61', 'up', '昨结', '3900', ''],
            ['幅度', '1.56%', 'up', '开盘', '3910', 'up'], ['总手', '73551', 'mark', '最高', '3970', 'up'],
            ['现手', '1', 'mark', '最低', '3910', 'up'], ['涨停', '4329', 'up', '跌停', '3471', 'down'],
            ['持仓', '380198', 'mark', '仓差', '-17219', 'mark'], ['外盘', '38300', 'up', '内盘', '35250', 'down']
        ];
        const ticks = [['20:59', 3910, 6426, -5548, '多平', 'down'], ['21:00', 3936, 310, -209, '多平', 'down'],
            ['21:01', 3940, 473, -83, '多平', 'down'], ['21:12', 3929, 398, -332, '空平', 'up']];
        const level = ([name, price, size]) => `
            <tr${name[1] === '一' ? ' class="best"' : ''}><th>${name}</th><td class="up">${price}</td><td class="size mark">${size}</td></tr>`;

        this.shadowRoot.innerHTML = `
            <style>
                ${RESET}
                :host {
                    display: flex;
                    flex-direction: column;
                    width: 241px;
                    border-left: 1px solid var(--line);
                    background: #000;
                    color: #e8e8e8;
                    font-size: 14px;
                }
                header { display: flex; align-items: flex-start; height: 25px; border-bottom: 1px solid var(--line); }
                h2 { flex: 1; margin: 0; text-align: center; font: 21px/24px "Liberation Serif", "Noto Sans CJK SC", serif; color: #e0e000; white-space: nowrap; }
                header button { margin: 1px 1px 0 0; }
                .ratio { display: flex; height: 4px; margin: 0 1px 1px; }
                .ratio i:first-child { flex: 161; background: #ff4040; }
                .ratio i:last-child { flex: 78; background: #00e600; }
                table { width: 100%; table-layout: fixed; border-spacing: 0; }
                tr { height: 20px; }
                th, td { padding: 0; line-height: 18px; text-align: right; white-space: nowrap; }
                th { font-weight: 400; text-align: left; }
                td { font-weight: bold; }
                table.levels, table.stats { border-bottom: 1px solid var(--line); }
                .levels .size { text-align: left; padding-left: 14px; }
                .stats th:nth-child(3) { padding-left: 14px; }
                .stats td:last-child { padding-right: 6px; }
                .best { height: 30px; }
                .best td { font-size: 22px; }
                .ticks tr { height: 22px; }
                .ticks th { color: #808080; text-align: right; }
                .ticks td:last-child { font-weight: 400; }
                tr > :first-child, .ticks tr > :first-child { padding-left: 4px; text-align: left; }
                .up { color: var(--up); }
                .down { color: var(--down); }
                .mark { color: var(--mark); }
                footer { display: flex; margin-top: auto; height: 15px; }
                footer button { width: 37px; font-size: 12px; line-height: 14px; border-right: 1px solid var(--line); border-bottom: 1px solid var(--line); border-radius: 0 0 3px 0; }
                footer i { flex: 1; border-top: 1px solid var(--line); }
            </style>
            <header>
                <h2>螺纹2301(rb2301)</h2>
                <button aria-label="最大化"><svg width="16" height="14" fill="none" stroke="#78b4ff"><path d="M.5.5h15v13H.5zM3.500 4h9M3.500 3.500h9v7h-9z"/></svg></button>
            </header>
            <div class="ratio"><i></i><i></i></div>
            <table class="levels"><colgroup><col style="width:32px"><col style="width:81px"><col></colgroup>${asks.map(level).join('')}</table>
            <table class="levels"><colgroup><col style="width:32px"><col style="width:81px"><col></colgroup>${bids.map(level).join('')}</table>
            <table class="stats">
                <colgroup><col style="width:32px"><col style="width:81px"><col style="width:44px"><col></colgroup>
                ${stats.map(s => `<tr><th>${s[0]}</th><td class="${s[2]}">${s[1]}</td><th>${s[3]}</th><td class="${s[5]}">${s[4]}</td></tr>`).join('')}
            </table>
            <table class="ticks">
                <colgroup><col style="width:45px"><col style="width:63px"><col style="width:48px"><col style="width:48px"><col></colgroup>
                <tr><th>北京</th><th>价格</th><th>√大单</th><th>仓差</th><th>性质</th></tr>
                ${ticks.map(t => `<tr><td>${t[0]}</td><td class="up">${t[1]}</td><td class="${t[5]}">${t[2]}</td><td class="mark">${t[3]}</td><td class="${t[5]}">${t[4]}</td></tr>`).join('')}
            </table>
            <footer><button>笔</button><i></i></footer>
        `;
    }
}

/* ---------- status bar ---------- */
class IndexBar extends HTMLElement {
    constructor() {
        super();
        this.attachShadow({ mode: 'open' });
    }

    connectedCallback() {
        const data = [['沪', '3206.95', '+9.60', '4477.50亿'], ['深', '11501.58', '+111.79', '5613.46亿'], ['300', '3998.24', '+39.06', '2681.67亿']];
        this.shadowRoot.innerHTML = `
            <style>
                ${RESET}
                :host {
                    display: flex;
                    align-items: center;
                    height: 22px;
                    padding-left: 8px;
                    background: linear-gradient(#cfcfcf, #a8a8a8 75%, #c4c4c4);
                    font: bold 12px/16px "Liberation Mono", "Noto Sans CJK SC", monospace;
                    color: #444;
                }
                div { display: grid; grid-template-columns: 20px 58px 63px 78px 9px; text-align: right; white-space: nowrap; }
                div :first-child { text-align: left; }
                .up { color: #ff2020; }
                .amount { text-align: left; padding-left: 8px; }
                i { width: 1px; height: 12px; align-self: center; background: #888; }
            </style>
            ${data.map(d => `<div><span>${d[0]}</span><span class="up">${d[1]}</span><span class="up">${d[2]}</span><span class="amount">${d[3]}</span><i></i></div>`).join('')}
        `;
    }
}

/* ---------- input method bar ---------- */
class ImeBar extends HTMLElement {
    constructor() {
        super();
        this.attachShadow({ mode: 'open' });
    }

    connectedCallback() {
        this.shadowRoot.innerHTML = `
            <style>
                ${RESET}
                :host {
                    display: flex;
                    align-items: center;
                    gap: 8px;
                    height: 26px;
                    padding: 0 4px 0 22px;
                    background: #fff;
                    border: 1px solid #a8c4e0;
                    border-radius: 2px;
                    color: #0c6cdc;
                }
                .logo { position: absolute; left: -15px; top: -4px; }
                button { width: 16px; height: 18px; font: bold 16px/18px "Noto Sans CJK SC", sans-serif; }
            </style>
            <svg class="logo" width="32" height="32" viewBox="0 0 32 32">
                <g transform="rotate(-12 16 16)"><rect x="2" y="2" width="28" height="28" rx="4" fill="#f4511e"/>
                <path d="M24 9q-8-3-13-1-4 3 1 6l7 2q5 3 0 6-5 2-11 0" fill="none" stroke="#fff" stroke-width="4.500" stroke-linecap="round"/></g>
            </svg>
            <button>中</button>
            <button aria-label="标点"><svg width="16" height="18"><circle cx="5" cy="6" r="2" fill="none" stroke="#0c6cdc" stroke-width="1.500"/><path d="M10 9h4q1 5-4 6 2-1 1-3h-1z" fill="#0c6cdc"/></svg></button>
            <button aria-label="语音"><svg width="16" height="18"><rect x="5" y="1" width="6" height="10" rx="3" fill="#0c6cdc"/><path d="M3 8q0 5 5 5t5-5M8 13v4M5 16.500h6" fill="none" stroke="#0c6cdc" stroke-width="1.500"/></svg></button>
            <button aria-label="键盘"><svg width="16" height="18"><rect x="0" y="3" width="16" height="12" rx="1" fill="#0c6cdc"/><path d="M2 6.500h12M2 9.500h12" stroke="#fff" stroke-width="2" stroke-dasharray="2 1"/><path d="M4 12.500h8" stroke="#fff"/></svg></button>
            <button aria-label="皮肤"><svg width="16" height="18"><path d="M5 2q3 3 6 0l5 3-2 4-2-1v8H4V8L2 9 0 5z" fill="#0c6cdc"/></svg></button>
            <button aria-label="工具箱"><svg width="16" height="18" fill="#0c6cdc"><rect x="1" y="3" width="6" height="6" rx="1"/><circle cx="12" cy="6" r="3"/><rect x="1" y="10" width="6" height="6" rx="1"/><rect x="9" y="10" width="6" height="6" rx="1"/></svg></button>
        `;
    }
}

/* ---------- whole screen ---------- */
class TradeApp extends HTMLElement {
    constructor() {
        super();
        this.attachShadow({ mode: 'open' });
    }

    connectedCallback() {
        this.shadowRoot.innerHTML = `
            <style>
                ${RESET}
                :host { display: grid; grid-template-columns: minmax(0, 1fr) 9px; height: 100vh; position: relative; overflow: hidden; }
                .window { display: grid; grid-template-rows: 25px 24px minmax(0, 1fr) 22px; min-width: 0; border-right: 2px solid #cdc0c8; }
                main { display: grid; grid-template-columns: 20px minmax(0, 1fr) auto; min-height: 0; }
                .desktop {
                    background:
                        linear-gradient(#d8b0c8, #b06090) 0 108px / 100% 44px no-repeat,
                        linear-gradient(#d8b0c8, #b878a0) 0 201px / 100% 44px no-repeat,
                        linear-gradient(#e0bcd0, #a84884) 0 249px / 100% 44px no-repeat,
                        linear-gradient(#7a1050, #8c1c60 25%, #a03070 60%, #3c0824 92%, #c8a8b8 98%);
                }
                ime-bar { position: absolute; right: 11px; bottom: 1px; z-index: 2; }
                .tip {
                    position: absolute;
                    right: 9px;
                    bottom: 63px;
                    z-index: 2;
                    padding: 2px 7px 2px 5px;
                    border: 1px solid #767676;
                    border-radius: 2px;
                    background: linear-gradient(#fff, #e4e4f0);
                    color: #575757;
                    font: 12px/17px "Noto Sans CJK SC", sans-serif;
                }
            </style>
            <div class="window">
                <menu-bar></menu-bar>
                <tool-bar></tool-bar>
                <main>
                    <side-tabs></side-tabs>
                    <chart-view></chart-view>
                    <quote-board></quote-board>
                </main>
                <index-bar></index-bar>
            </div>
            <div class="desktop"></div>
            <div class="tip" role="tooltip">2022年12月11日<br>星期日</div>
            <ime-bar></ime-bar>
        `;
    }
}

customElements.define('menu-bar', MenuBar);
customElements.define('tool-bar', ToolBar);
customElements.define('side-tabs', SideTabs);
customElements.define('chart-panel', ChartPanel);
customElements.define('value-box', ValueBox);
customElements.define('chart-view', ChartView);
customElements.define('quote-board', QuoteBoard);
customElements.define('index-bar', IndexBar);
customElements.define('ime-bar', ImeBar);
customElements.define('trade-app', TradeApp);
</script>
</body>
</html>
